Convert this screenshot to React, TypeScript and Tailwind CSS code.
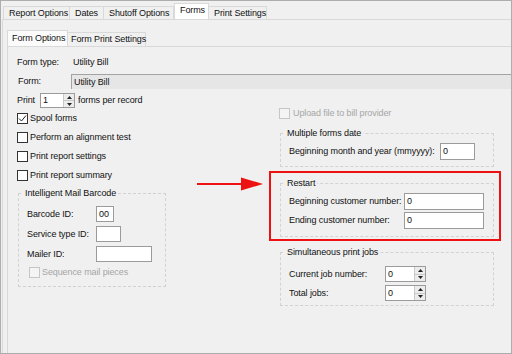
import type { ReactNode } from "react";

/* Windows-style "Forms" settings dialog page, with a red annotation arrow + box
   around the Restart group. */

const TOP_TABS = [
  { label: "Report Options", w: "w-[67px]" },
  { label: "Dates", w: "w-[34px]" },
  { label: "Shutoff Options", w: "w-[70px]" },
  { label: "Forms", w: "w-[35px]", active: true },
  { label: "Print Settings", w: "w-[58px]" },
];

export default function App() {
  return (
    <div className="relative flex h-[354px] w-[512px] flex-col overflow-hidden whitespace-nowrap border border-[#adadad] bg-[#f0f0f0] font-['Liberation_Sans',Arial,sans-serif] text-[9px] leading-none tracking-[-0.1px] text-[#111111]">
      {/* ── top tab strip ── */}
      <div className="flex h-[18px] items-end pl-[2px]">
        {TOP_TABS.map((t) => (
          <div
            key={t.label}
            className={`flex shrink-0 items-center pl-[5px] ${t.w} ${
              t.active
                ? "h-[16px] border-x border-t border-[#d9d9d9] bg-white pb-[3px]"
                : "h-[13px] border-r border-t border-[#d9d9d9] first:border-l"
            }`}
          >
            {t.label}
          </div>
        ))}
      </div>

      {/* ── outer tab page ── */}
      <div className="ml-[1px] flex flex-1 flex-col border-l border-t border-[#d9d9d9] pl-[4px] pt-[10px]">
        <div className="flex h-[16px] items-end">
          <div className="flex h-[16px] w-[61px] shrink-0 items-center border-x border-t border-[#d9d9d9] bg-[#fbfbfb] pb-[1px] pl-[4px]">Form Options</div>
          <div className="flex h-[14px] w-[78px] shrink-0 items-center border-r border-t border-[#d9d9d9] pl-[3px]">Form Print Settings</div>
        </div>

        {/* ── inner tab page ── */}
        <div className="flex flex-1 flex-col border-l border-t border-[#d9d9d9] pl-[9px] pt-[9px]">
          <div className="flex h-[12px] items-center">
            <span className="w-[56px] shrink-0">Form type:</span>
            <span>Utility Bill</span>
          </div>
          <div className="mt-[6px] flex h-[15px] items-center">
            <span className="w-[54px] shrink-0 pl-[1px]">Form:</span>
            <div className="flex h-full flex-1 items-center border-l border-t border-[#a3a3a3] bg-[#e6e6e6] pl-[2px]">Utility Bill</div>
          </div>

          <div className="mt-[4px] flex">
            {/* left column */}
            <div className="flex w-[252px] shrink-0 flex-col">
              <div className="flex h-[15px] items-center gap-[3px]">
                <span className="w-[20px] shrink-0">Print</span>
                <Spin value="1" w="w-[35px]" h="h-[15px]" />
                <span>forms per record</span>
              </div>
              <div className="mt-[1px] flex flex-col">
                <Check label="Spool forms" checked />
                <Check label="Perform an alignment test" />
                <Check label="Print report settings" />
                <Check label="Print report summary" />
              </div>
              <Group title="Intelligent Mail Barcode" className="ml-[1px] mt-[3px] w-[148px] pb-[8px] pl-[8px] pt-[8px]">
                <div className="flex flex-col gap-[4px]">
                  <LabeledInput label="Barcode ID:" lw="w-[69px]">
                    <Field value="00" w="w-[18px]" h="h-[16px]" />
                  </LabeledInput>
                  <LabeledInput label="Service type ID:" lw="w-[69px]">
                    <Field value="" w="w-[25px]" h="h-[16px]" />
                  </LabeledInput>
                  <LabeledInput label="Mailer ID:" lw="w-[69px]">
                    <Field value="" w="w-[56px]" h="h-[16px]" />
                  </LabeledInput>
                  <div className="flex h-[12px] items-center gap-[2px] pl-[2px] text-[#a6a6a6]">
                    <Box disabled />
                    <span>Sequence mail pieces</span>
                  </div>
                </div>
              </Group>
            </div>

            {/* right column */}
            <div className="flex flex-col">
              <div className="ml-[10px] mt-[13px] flex h-[14px] items-center gap-[3px] text-[#a6a6a6]">
                <Box disabled />
                <span>Upload file to bill provider</span>
              </div>

              <Group title="Multiple forms date" className="ml-[11px] mt-[8px] w-[214px] pb-[6px] pl-[8px] pt-[5px]">
                <LabeledInput label="Beginning month and year (mmyyyy):" lw="w-[151px]">
                  <Field value="0" w="w-[35px]" h="h-[17px]" />
                </LabeledInput>
              </Group>

              <div className="mt-[4px] w-[232px] border-2 border-[#ee1111] pb-[2px] pl-[9px] pt-[5px]">
                <Group title="Restart" className="w-[214px] pb-[7px] pl-[8px] pt-[5px]">
                  <div className="flex flex-col gap-[2px]">
                    <LabeledInput label="Beginning customer number:" lw="w-[115px]">
                      <Field value="0" w="w-[80px]" h="h-[17px]" />
                    </LabeledInput>
                    <LabeledInput label="Ending customer number:" lw="w-[115px]">
                      <Field value="0" w="w-[80px]" h="h-[17px]" />
                    </LabeledInput>
                  </div>
                </Group>
              </div>

              <Group title="Simultaneous print jobs" className="ml-[11px] mt-[6px] w-[214px] pb-[4px] pl-[8px] pt-[9px]">
                <div className="flex flex-col gap-[3px]">
                  <LabeledInput label="Current job number:" lw="w-[96px]">
                    <Spin value="0" w="w-[41px]" h="h-[16px]" />
                  </LabeledInput>
                  <LabeledInput label="Total jobs:" lw="w-[96px]">
                    <Spin value="0" w="w-[41px]" h="h-[16px]" />
                  </LabeledInput>
                </div>
              </Group>
            </div>
          </div>
        </div>
      </div>

      {/* annotation arrow pointing at the Restart box */}
      <svg className="absolute left-[196px] top-[176px]" width="67" height="14" viewBox="0 0 67 14" aria-hidden>
        <line x1="0" y1="7" x2="46" y2="7" stroke="#ee1111" strokeWidth="2" />
        <polygon points="44,0.5 66,7 44,13.5" fill="#ee1111" />
      </svg>
    </div>
  );
}

function Group({ title, className, children }: { title: string; className: string; children: ReactNode }) {
  return (
    <fieldset className={`border border-dashed border-[#d2d2d2] ${className}`}>
      <legend className="-ml-[4px] h-[10px] px-[2px] leading-[10px]">{title}</legend>
      {children}
    </fieldset>
  );
}

function LabeledInput({ label, lw, children }: { label: string; lw: string; children: ReactNode }) {
  return (
    <div className="flex items-center">
      <span className={`shrink-0 ${lw}`}>{label}</span>
      {children}
    </div>
  );
}

function Field({ value, w, h }: { value: string; w: string; h: string }) {
  return <div className={`flex shrink-0 items-center border border-[#9b9b9b] bg-white pl-[2px] ${w} ${h}`}>{value}</div>;
}

function Spin({ value, w, h }: { value: string; w: string; h: string }) {
  return (
    <div className={`flex shrink-0 border border-[#9b9b9b] bg-white ${w} ${h}`}>
      <span className="flex flex-1 items-center pl-[2px]">{value}</span>
      <span className="flex w-[11px] flex-col border-l border-[#c9c9c9] bg-[#ececec]">
        <span className="flex flex-1 items-center justify-center border-b border-[#c9c9c9]">
          <svg width="5" height="3" viewBox="0 0 5 3" aria-hidden><path d="M0 3h5L2.5 0z" fill="#222" /></svg>
        </span>
        <span className="flex flex-1 items-center justify-center">
          <svg width="5" height="3" viewBox="0 0 5 3" aria-hidden><path d="M0 0h5L2.5 3z" fill="#222" /></svg>
        </span>
      </span>
    </div>
  );
}

function Box({ checked, disabled }: { checked?: boolean; disabled?: boolean }) {
  return (
    <span
      className={`flex h-[11px] w-[11px] shrink-0 items-center justify-center border ${
        disabled ? "border-[#c6c6c6] bg-[#f4f4f4]" : "border-[#333333] bg-white"
      }`}
    >
      {checked && (
        <svg width="9" height="9" viewBox="0 0 9 9" fill="none" stroke="#222" strokeWidth="1" aria-hidden>
          <polyline points="1 4.5 3.5 7 8 1.5" />
        </svg>
      )}
    </span>
  );
}

function Check({ label, checked }: { label: string; checked?: boolean }) {
  return (
    <div className="flex h-[19px] items-center gap-[2px]">
      <Box checked={checked} />
      <span>{label}</span>
    </div>
  );
}
